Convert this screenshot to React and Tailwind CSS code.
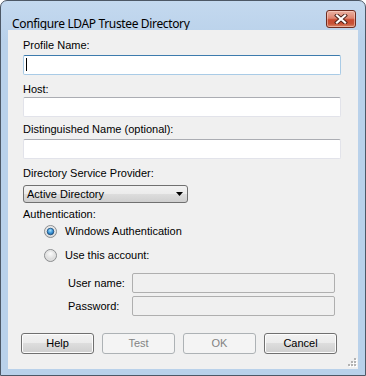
import React from 'react';

const font = "font-['Liberation_Sans',Arial,sans-serif] text-[11px] leading-[13px] text-black";

const Radio = ({ checked }) => (
  <svg width="13" height="13" viewBox="0 0 13 13" className="shrink-0">
    <defs>
      <radialGradient id={checked ? 'rgc' : 'rgu'} cx="50%" cy="35%" r="65%">
        <stop offset="0%" stopColor="#fbfbfb" />
        <stop offset="100%" stopColor="#cfcfcf" />
      </radialGradient>
      <radialGradient id="dot" cx="45%" cy="35%" r="70%">
        <stop offset="0%" stopColor="#a6e2ff" />
        <stop offset="55%" stopColor="#3a93d6" />
        <stop offset="100%" stopColor="#1d5c94" />
      </radialGradient>
    </defs>
    <circle cx="6.5" cy="6.5" r="6" fill={`url(#${checked ? 'rgc' : 'rgu'})`} stroke="#8c8e90" strokeWidth="1" />
    <circle cx="6.5" cy="6.5" r="4.6" fill="none" stroke="#e4e4e4" strokeWidth="1" />
    {checked && <circle cx="6.5" cy="6.5" r="3.3" fill="url(#dot)" stroke="#1b4a78" strokeWidth="0.8" />}
  </svg>
);

const Btn = ({ children, disabled }) => (
  <div
    className={`w-[73px] h-[21px] rounded-[3px] border flex items-center justify-center ${
      disabled
        ? 'border-[#adb2b5] bg-[#f4f4f4] text-[#838383]'
        : 'border-[#707070] bg-[linear-gradient(#f2f2f2_0%,#ebebeb_50%,#dddddd_50%,#cfcfcf_100%)] shadow-[inset_0_0_0_1px_#fcfcfc] text-black'
    }`}
  >
    <span className="font-['Liberation_Sans',Arial,sans-serif] text-[11px] leading-[13px]">{children}</span>
  </div>
);

const Field = ({ focused, children }) => (
  <div
    className={`relative h-[20px] bg-white rounded-[2px] border ${
      focused
        ? 'border-[#a9cbe6] border-t-[#3d7bad]'
        : 'border-[#e2e3ea] border-t-[#abadb3]'
    }`}
  >
    {children}
  </div>
);

export default function App() {
  return (
    <div className="w-[366px] h-[376px] bg-white">
      <div className="w-full h-full flex flex-col border border-[#4d5866] rounded-t-[7px] bg-[linear-gradient(#c4d9ef,#b9d1ea_40px)] relative">
        {/* title bar */}
        <div className="h-[29px] shrink-0 pl-[11px] pt-[9px]">
          <span className="font-['Noto_Sans',sans-serif] text-[12px] leading-[16px] tracking-[-0.35px] text-black">
            Configure LDAP Trustee Directory
          </span>
        </div>
        <div className="absolute top-[9px] right-[9px] w-[30px] h-[18px] rounded-[3px] border border-[#6e2c20] bg-[linear-gradient(#eab1a2_0%,#de8570_45%,#c94a30_55%,#c85236_80%,#d98a6c_100%)] shadow-[inset_0_0_0_1px_rgba(255,220,210,0.5)] flex items-center justify-center">
          <svg width="14" height="10" viewBox="0 0 14 10">
            <path d="M3 1.5 L11 8.5 M11 1.5 L3 8.5" stroke="#4b2018" strokeWidth="4" strokeLinecap="square" />
            <path d="M3 1.5 L11 8.5 M11 1.5 L3 8.5" stroke="#ffffff" strokeWidth="2.2" strokeLinecap="square" />
          </svg>
        </div>

        {/* client area */}
        <div className="relative flex-1 mx-[7px] mb-[6px] bg-[#f0f0f0] flex flex-col">
          <div className={`px-[15px] pr-[17px] pt-[9px] flex flex-col ${font}`}>
            <div>Profile Name:</div>
            <div className="mt-[3px]">
              <Field focused>
                <span className="absolute left-[2px] top-[2px] w-px h-[13px] bg-black" />
              </Field>
            </div>
            <div className="mt-[8px]">Host:</div>
            <div className="mt-[1px]">
              <Field />
            </div>
            <div className="mt-[6px]">Distinguished Name (optional):</div>
            <div className="mt-[3px]">
              <Field />
            </div>
            <div className="mt-[8px]">Directory Service Provider:</div>
            <div className="mt-[5px] w-[165px] h-[18px] rounded-[3px] border border-[#707070] bg-[linear-gradient(#f2f2f2_0%,#ebebeb_50%,#dddddd_50%,#cfcfcf_100%)] flex items-center justify-between pl-[3px] pr-[4px]">
              <span>Active Directory</span>
              <svg width="7" height="4" viewBox="0 0 7 4">
                <path d="M0 0 H7 L3.5 4 Z" fill="#000" />
              </svg>
            </div>
            <div className="mt-[5px]">Authentication:</div>
            <div className="mt-[4px] ml-[21px] flex items-center gap-[8px]">
              <Radio checked />
              <span>Windows Authentication</span>
            </div>
            <div className="mt-[11px] ml-[21px] flex items-center gap-[8px]">
              <Radio />
              <span>Use this account:</span>
            </div>
            <div className="mt-[11px] ml-[45px] flex items-center">
              <span className="w-[64px]">User name:</span>
              <div className="w-[203px] h-[20px] rounded-[2px] border border-[#afafaf] bg-[#f0f0f0]" />
            </div>
            <div className="mt-[3px] ml-[45px] flex items-center">
              <span className="w-[64px]">Password:</span>
              <div className="w-[203px] h-[20px] rounded-[2px] border border-[#afafaf] bg-[#f0f0f0]" />
            </div>
          </div>

          <div className="mt-[17px] pl-[13px] flex gap-[8px]">
            <Btn>Help</Btn>
            <Btn disabled>Test</Btn>
            <Btn disabled>OK</Btn>
            <Btn>Cancel</Btn>
          </div>

          {/* size grip */}
          <svg width="10" height="10" viewBox="0 0 10 10" className="absolute right-[1px] bottom-[2px]">
            {[[7, 1], [4, 4], [7, 4], [1, 7], [4, 7], [7, 7]].map(([x, y], i) => (
              <g key={i}>
                <rect x={x + 1} y={y + 1} width="2" height="2" fill="#ffffff" />
                <rect x={x} y={y} width="2" height="2" fill="#b3b3b3" />
              </g>
            ))}
          </svg>
        </div>
      </div>
    </div>
  );
}
